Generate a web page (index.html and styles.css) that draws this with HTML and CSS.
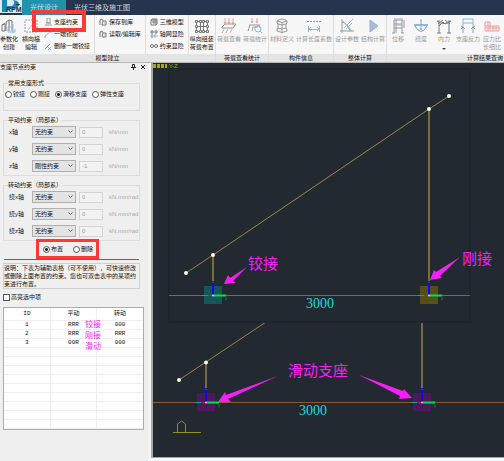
FILE: index.html
```html
<!DOCTYPE html>
<html lang="zh-CN">
<head>
  <meta charset="UTF-8" />
  <meta name="viewport" content="width=device-width, initial-scale=1.0"/>
  <title>光伏设计</title>
  <link rel="stylesheet" href="styles.css">
</head>
<body>
  <header class="topbar">
    <div class="logo">
      <svg width="22" height="15" viewBox="0 0 22 15">
        <rect width="22" height="15" fill="#d9eaf0"/>
        <path d="M2 12V0h9q8 0 8 4t-7 5H7v3z" fill="#1989b4"/>
        <path d="M7 0h6q3 3-1 6H7z" fill="#d9eaf0"/>
        <path d="M0 13h22v2H0z" fill="#26344d"/>
        <text x="6" y="12" class="logo-text">RPM</text>
        <path d="M16 4h4l-2 2z" fill="#123"/>
      </svg>
    </div>
    <nav class="tabs">
      <a href="#" class="tab active">光伏设计</a>
      <a href="#" class="tab">光伏三维及施工图</a>
    </nav>
  </header>

  <div class="ribbon">
    <section class="group">
      <div class="tools">
        <div class="big-tools">
          <button class="tool"><svg width="16" height="16" viewBox="0 0 16 16" class="ico dark"><path d="M1 13V7l3-1v7zM5 13V4l3-2v11M8 2l3 1v10M1 7l3-2"/><path class="blue" d="M7 9h5v5H7zM12 6v3M14 11v3h-3"/></svg>参数化<br>创建</button>
          <button class="tool"><svg width="16" height="16" viewBox="0 0 16 16" class="ico"><path stroke-dasharray="2 1" d="M2 2h12v12H2z"/><path class="blue" d="M5 12l5-6"/></svg>横向榀<br>编辑</button>
        </div>
        <div class="rows">
          <button class="row-tool"><svg width="8" height="8" viewBox="0 0 8 8" class="ico"><path d="M3 0h3v5H3zM1 7h7M2 5h5"/></svg>支座约束</button>
          <button class="row-tool"><svg width="8" height="8" viewBox="0 0 8 8" class="ico"><path class="blue" d="M1 6l5-4M5 1h2v2"/><path d="M0 7h2"/></svg>一端铰接</button>
          <button class="row-tool"><svg width="8" height="8" viewBox="0 0 8 8" class="ico"><path d="M1 7l5-5"/><path class="red" d="M4 5l3 3M7 5L4 8"/></svg>删除一端铰接</button>
          <span class="mark-support"></span>
        </div>
        <div class="rows line-left">
          <button class="row-tool"><svg width="8" height="8" viewBox="0 0 8 8" class="ico dark"><path d="M1 7V2l2-1 1 2M4 3h3v4H3z"/><path class="blue" d="M5 5h2"/></svg>保存到库</button>
          <button class="row-tool"><svg width="8" height="8" viewBox="0 0 8 8" class="ico dark"><path d="M1 7V2l2-1 1 2M4 3h3v4H3z"/><path class="blue" d="M5 5h2"/></svg>读取/编辑库</button>
        </div>
        <div class="rows line-left">
          <button class="row-tool"><svg width="8" height="8" viewBox="0 0 8 8" class="ico dark"><path d="M1 2h5v5H1zM1 2l1-1h5v5L6 7M3 3h2v2H3z"/></svg>三维模型</button>
          <button class="row-tool"><svg width="8" height="8" viewBox="0 0 8 8" class="ico dark"><path d="M2 0v8M0 2h8M6 0v4"/><path class="blue" d="M0 6h8M5 4v4"/></svg>轴网显隐</button>
          <button class="row-tool"><svg width="8" height="8" viewBox="0 0 8 8" class="ico dark"><circle cx="2" cy="4" r="1.5"/><circle cx="6" cy="4" r="1.5"/></svg>约束显隐</button>
        </div>
        <div class="big-tools line-left">
          <button class="tool"><svg width="16" height="16" viewBox="0 0 16 16" class="ico dark"><path d="M2 3.5h12M2 8.5h12M2 13.5h12M2.5 3v10M6.5 3v10M9.5 3v10M13.5 3v10"/><path fill="#f7f7f7" d="M1.500 2.500h2v2h-2zM5.500 2.500h2v2h-2zM8.500 2.500h2v2h-2zM12.500 2.500h2v2h-2zM1.500 7.500h2v2h-2zM12.500 7.500h2v2h-2zM1.500 12.500h2v2h-2zM5.500 12.500h2v2h-2zM8.500 12.500h2v2h-2zM12.500 12.500h2v2h-2z"/></svg>纵向组装<br>荷载布置</button>
        </div>
      </div>
      <h2>模型建立</h2>
    </section>

    <section class="group">
      <div class="tools pair">
        <button class="tool" disabled><svg width="16" height="16" viewBox="0 0 16 16" class="ico"><path class="red" d="M4 0v5M8 0v5M12 0v5M3 4l1 2 1-2M7 4l1 2 1-2M11 4l1 2 1-2M3 11l-2 4M7 11l-2 4M11 11l-2 4"/><path d="M1 9l3-3h11l-3 4H1z"/></svg>荷载查看</button>
        <button class="tool" disabled><svg width="16" height="16" viewBox="0 0 16 16" class="ico"><path class="red" d="M5 0v4M10 0v4M4 3l1 2 1-2M9 3l1 2 1-2"/><path d="M2 7h11M3 7l-2 6M5 13l1-4h5M12 7l1 3"/><circle class="blue" cx="11" cy="11" r="3"/><path class="blue" d="M13 13l2 2"/></svg>荷载统计</button>
      </div>
      <h2>荷载查看统计</h2>
    </section>

    <section class="group">
      <div class="tools pair">
        <button class="tool" disabled><svg width="16" height="16" viewBox="0 0 16 16" class="ico"><path d="M3 3q5-4 10 0v2l-1 1v4l1 1v2q-5 3-10 0v-2l1-1V6L3 5zM3 3q5 3 10 0M4 6q4 2 8 0M4 10q4 2 8 0M8 4v11"/></svg>材料定义</button>
        <button class="tool" disabled><svg width="16" height="16" viewBox="0 0 16 16" class="ico"><path stroke-dasharray="2 1" d="M1 3.5h14"/><path class="blue" d="M2.500 8v6M13.500 8v6M2 11.500h12M5 9l-2 2 2 2M11 9l2 2-2 2"/></svg>计算长度系数</button>
      </div>
      <h2>构件信息</h2>
    </section>

    <section class="group">
      <div class="tools pair">
        <button class="tool" disabled><svg width="16" height="16" viewBox="0 0 16 16" class="ico"><path d="M3 1v14M1 13h14M3 4q5 1 8 9"/><path class="blue" d="M5 10l9-9M7 11l6-6M4 3l9 10"/></svg>设计参数</button>
        <button class="tool" disabled><svg width="16" height="16" viewBox="0 0 16 16"><path d="M5 2l8 6-8 6z" fill="#a9bdd3" stroke="#8fb0d6"/></svg>结构计算</button>
      </div>
      <h2>整体计算</h2>
    </section>

    <section class="group results">
      <div class="tools">
        <button class="tool" disabled><svg width="16" height="16" viewBox="0 0 16 16" class="ico"><path d="M4 2v13M12 2v13M2 15h3M11 15h3M4 2h9M4 6h8M4 10h8M6 2v13M14 2v8"/><path class="blue" d="M4 1h9M5 7h7"/></svg>位移</button>
        <button class="tool" disabled><svg width="16" height="16" viewBox="0 0 16 16" class="ico"><path d="M8 1v6M2 8q6 11 12 0"/><path class="blue" stroke-width="2" d="M1 7h14"/><path class="blue" d="M8 8v3M7 10l1 2 1-2"/></svg>挠度</button>
        <button class="tool" disabled><svg width="16" height="16" viewBox="0 0 16 16" class="ico dark"><path d="M1 3q7 5 14 0M3 2v13M13 2v13M2 6l5-4M14 6L9 2M3 8l4-4 2 2 4-2M1 15h4M11 15h4"/></svg>内力<span class="caret"></span></button>
        <button class="tool" disabled><svg width="16" height="16" viewBox="0 0 16 16" class="ico"><path class="blue" d="M3 1h10v4H3zM3 5v4M13 5v4"/><path d="M3 9v6M13 9v6M1 11l2-2 2 2M11 11l2-2 2 2M1 8l2 1M15 8l-2 1"/></svg>支座反力</button>
        <button class="tool" disabled><svg width="16" height="16" viewBox="0 0 16 16" class="ico"><path class="red" d="M1 4h5v4h9v5H1zM1 8h5M1 10h14M4 4v9M6 8v5M9 8v5M12 8v5"/></svg>应力比<br>长细比</button>
      </div>
      <h2>计算结果查询</h2>
    </section>
  </div>

  <main class="workspace">
    <aside class="panel">
      <div class="panel-title">
        <span>支座节点约束</span>
        <svg width="16" height="8" viewBox="0 0 16 8"><path d="M2.500 1.500h2v3h-2zM1 4.500h5M3.500 5v2M11 2l4 4M15 2l-4 4" fill="none" stroke="#222"/></svg>
      </div>

      <fieldset>
        <legend>常用支座形式</legend>
        <div class="radios">
          <label><input type="radio" name="type">铰接</label>
          <label><input type="radio" name="type">刚接</label>
          <label><input type="radio" name="type" checked>滑移支座</label>
          <label><input type="radio" name="type">弹性支座</label>
        </div>
      </fieldset>

      <fieldset>
        <legend>平动约束（局部系）</legend>
        <div class="field"><label for="tx">x轴</label><select id="tx"><option>无约束</option></select><input type="text" value="0" aria-label="x轴刚度" disabled><span>kN/mm</span></div>
        <div class="field"><label for="ty">y轴</label><select id="ty"><option>无约束</option></select><input type="text" value="0" aria-label="y轴刚度" disabled><span>kN/mm</span></div>
        <div class="field"><label for="tz">z轴</label><select id="tz"><option>刚性约束</option></select><input type="text" value="-1" aria-label="z轴刚度" disabled><span>kN/mm</span></div>
      </fieldset>

      <fieldset>
        <legend>转动约束（局部系）</legend>
        <div class="field"><label for="rx">绕x轴</label><select id="rx"><option>无约束</option></select><input type="text" value="0" aria-label="绕x轴刚度" disabled><span>kN.mm/rad</span></div>
        <div class="field"><label for="ry">绕y轴</label><select id="ry"><option>无约束</option></select><input type="text" value="0" aria-label="绕y轴刚度" disabled><span>kN.mm/rad</span></div>
        <div class="field"><label for="rz">绕z轴</label><select id="rz"><option>无约束</option></select><input type="text" value="0" aria-label="绕z轴刚度" disabled><span>kN.mm/rad</span></div>
      </fieldset>

      <div class="mode">
        <label><input type="radio" name="mode" checked>布置</label>
        <label><input type="radio" name="mode">删除</label>
      </div>

      <p class="note">说明：下表为辅助表格（可不使用），可快速修改或删除上面布置的约束。您也可双击表中的某项约束进行布置。</p>

      <label class="highlight"><input type="checkbox">高亮选中项</label>

      <div class="table-box">
        <table>
          <thead>
            <tr><th>ID</th><th>平动</th><th>转动</th></tr>
          </thead>
          <tbody>
            <tr><td>1</td><td>RRR</td><td>000</td></tr>
            <tr><td>2</td><td>RRR</td><td>RRR</td></tr>
            <tr><td>3</td><td>00R</td><td>000</td></tr>
            <tr><td></td><td></td><td></td></tr>
            <tr><td></td><td></td><td></td></tr>
            <tr><td></td><td></td><td></td></tr>
            <tr><td></td><td></td><td></td></tr>
            <tr><td></td><td></td><td></td></tr>
            <tr><td></td><td></td><td></td></tr>
            <tr><td></td><td></td><td></td></tr>
            <tr><td></td><td></td><td></td></tr>
            <tr><td></td><td></td><td></td></tr>
          </tbody>
        </table>
        <div class="table-notes">铰接<br>刚接<br>滑动</div>
      </div>
    </aside>

    <div class="canvas">
      <svg viewBox="0 0 351 394">
        <defs>
          <!-- local axes, origin at the support node -->
          <g id="axes">
            <path d="M-11 0h6" stroke="#16a0a0"/>
            <path d="M-5 0h5" stroke="#c02040"/>
            <path d="M0 -1v-12" stroke="#0a0af0" stroke-width="2"/>
            <path d="M-5 -14h6" stroke="#1a1a9c"/>
            <path d="M1 0h12" stroke="#00e050" stroke-width="2"/>
            <path d="M12 2l1 1 1-1M13 3v2" stroke="#0a8a20" fill="none"/>
            <circle r="1" fill="#f0d0e0"/>
          </g>
        </defs>

        <g fill="#a9a800">
          <path d="M0 1h3v4H0zM4 1h3v4H4zM8 1h3v4H8zM12 1h2v4h-2z"/>
          <text x="14" y="5" class="view-name">:Y-Z</text>
        </g>

        <!-- lower view -->
        <path d="M0 339.5h351" stroke="#95562f"/>
        <path class="beam" d="M26 317L53 299L113 259"/>
        <path class="column" d="M53 299v40M269 259v80"/>
        <path d="M44 330h18v18H44zM260 330h18v18h-18z" fill="#4b1a5c"/>
        <use href="#axes" x="53" y="339.5"/>
        <use href="#axes" x="269" y="339.5"/>
        <g fill="#fff8e8"><circle cx="26" cy="317" r="2"/><circle cx="53" cy="299.5" r="2"/></g>
        <path d="M20 369.5h28M24.5 369v-8l4-3 4 3v8" fill="none" stroke="#8f8f10"/>

        <!-- upper view -->
        <rect class="view" x="16" y="6" width="301" height="253"/>
        <path d="M16 232.5h301" stroke="#95603f"/>
        <path d="M51 223h18v18H51z" fill="#165558"/>
        <path d="M267 223h18v18h-18z" fill="#55501a"/>
        <path class="beam" d="M33 210L60 192L276 46L296 33"/>
        <path class="column" d="M60 192v40M276 46v186"/>
        <use href="#axes" x="60" y="232.5"/>
        <use href="#axes" x="276" y="232.5"/>
        <g fill="#fff8e8">
          <circle cx="33" cy="210" r="2"/><circle cx="60" cy="192" r="2"/>
          <circle cx="276" cy="46" r="2"/><circle cx="296" cy="33" r="2"/>
        </g>

        <g fill="#f71ff7">
          <path d="M71 221l4-9 2 3 17-11-14 14 3 2z"/>
          <path d="M277 217l4-10 2 2 24-15-20 19 2 2z"/>
          <path d="M65 339l7-10 1 3 52-19-50 23 3 3z"/>
          <path d="M259 335l-8-9-1 2-44-16 41 21-1 3z"/>
        </g>

        <g class="callout">
          <text x="95" y="206">铰接</text>
          <text x="309" y="201">刚接</text>
          <text x="135" y="313">滑动支座</text>
        </g>
        <g class="dim">
          <text x="153" y="245">3000</text>
          <text x="146" y="352">3000</text>
        </g>
      </svg>
    </div>
  </main>
</body>
</html>
```
FILE: styles.css
```css
:root {
  --navy: #26344d;
  --teal: #2391ab;
  --panel: #efefef;
  --canvas: #222930;
  --mark: #fb3a38;
  --magenta: #f71ff7;
}

* {
  box-sizing: border-box;
}

body {
  margin: 0;
  min-height: 100vh;
  display: flex;
  flex-direction: column;
  overflow-x: hidden;
  background: #f8f8f8;
  color: #111;
  font-family: "Liberation Sans", "Noto Sans CJK SC", sans-serif;
  font-size: 6px;
  line-height: 8px;
  text-spacing-trim: space-all;
}

button, input, select {
  font: inherit;
  color: inherit;
  margin: 0;
}

/* top bar */
.topbar {
  display: flex;
  height: 15px;
  background: var(--navy);
}

.logo {
  width: 22px;
}

.logo svg {
  display: block;
}

.logo-text {
  font-size: 7px;
  font-weight: bold;
  fill: #17304a;
}

.tabs {
  display: flex;
}

.tab {
  padding: 0 8px;
  font-size: 7px;
  line-height: 16px;
  color: #cfd6e0;
  text-decoration: none;
}

.tab.active {
  background: var(--teal);
  color: #bfe3ec;
}

/* ribbon */
.ribbon {
  display: grid;
  grid-template-columns: 215px 53px 65px 53px 1fr;
  height: 48px;
  background: #f7f7f7;
  border-bottom: 1px solid #b4b4b4;
}

.group {
  display: flex;
  flex-direction: column;
  min-width: 0;
}

.group + .group {
  border-left: 1px solid #dcdcdc;
}

.group h2 {
  margin: 0;
  background: #e4e4e4;
  font-size: 6px;
  font-weight: normal;
  line-height: 8px;
  text-align: center;
}

.tools {
  display: flex;
  flex: 1;
}

.pair {
  justify-content: space-around;
}

.big-tools {
  display: flex;
  gap: 4px;
}

.tool {
  display: flex;
  flex-direction: column;
  align-items: center;
  padding: 3px 0 0;
  border: none;
  background: none;
  white-space: nowrap;
  text-align: center;
}

.tool svg {
  flex: none;
  margin-bottom: 1px;
}

.tool:disabled {
  color: #999;
}

.rows {
  display: flex;
  flex-direction: column;
  gap: 4px;
  position: relative;
  padding: 3px 4px 0;
}

.line-left {
  border-left: 1px solid #dcdcdc;
}

.big-tools.line-left {
  padding-left: 1px;
}

.row-tool {
  display: flex;
  align-items: center;
  gap: 2px;
  padding: 0;
  border: none;
  background: none;
  white-space: nowrap;
}

.mark-support {
  position: absolute;
  left: -8px;
  top: -5px;
  width: 54px;
  height: 22px;
  border: 4px solid var(--mark);
}

.ico {
  fill: none;
  stroke: #999;
}

.ico.dark {
  stroke: #777;
}

.ico .blue {
  stroke: #8fb6e4;
}

.ico .red {
  stroke: #e8a0a0;
}

.results {
  overflow: hidden;
}

.results h2 {
  width: 196px;
}

.results .tools {
  gap: 1px;
}

.results .tool {
  min-width: 22px;
}

.caret {
  margin-top: 5px;
  border: 2px solid transparent;
  border-top-color: #444;
}

/* work area */
.workspace {
  display: flex;
  flex: 1;
}

.panel {
  width: 149px;
  padding: 0 9px 0 3px;
  flex: none;
  background: var(--panel);
}

.panel-title {
  display: flex;
  justify-content: space-between;
  margin: 0 -6px 8px -3px;
}

fieldset {
  margin: 0 0 5px;
  padding: 1px 0 2px 4px;
  border: 1px solid #dcdcdc;
  min-width: 0;
}

legend {
  padding: 0;
}

.radios {
  display: flex;
  gap: 5px;
  height: 20px;
  margin-left: -3px;
  padding-top: 2px;
}

.radios label, .mode label, .highlight {
  display: flex;
  align-items: center;
  gap: 1px;
  height: 8px;
  white-space: nowrap;
}

input[type="radio"], input[type="checkbox"] {
  appearance: none;
  flex: none;
  width: 7px;
  height: 7px;
  border: 1px solid #555;
  background: #fff;
}

input[type="radio"] {
  border-radius: 50%;
}

input[type="radio"]:checked {
  background: radial-gradient(#222 0 1px, #fff 2px);
}

.field {
  display: grid;
  grid-template-columns: 24px 44px 24px 1fr;
  column-gap: 3px;
  align-items: center;
  height: 14px;
  margin-left: -3px;
}

.field + .field {
  margin-top: 3px;
}

.field label {
  padding-left: 4px;
}

.field select {
  appearance: none;
  min-width: 0;
  height: 12px;
  padding: 0 2px;
  border: 1px solid #b0b0b0;
  border-radius: 0;
  background: #e3e3e3 url("data:image/svg+xml,%3Csvg xmlns='http://www.w3.org/2000/svg' width='5' height='4'%3E%3Cpath d='M.5 .5l2 2 2-2' fill='none' stroke='%23666'/%3E%3C/svg%3E") no-repeat right 2px center;
}

.field input {
  min-width: 0;
  width: 24px;
  height: 11px;
  padding: 0 2px;
  border: 1px solid #d4d4d4;
  background: #f2f2f2;
  color: #999;
}

.field span {
  padding-left: 3px;
  color: #aaa;
}

.mode {
  display: flex;
  align-items: center;
  gap: 10px;
  width: 63px;
  height: 20px;
  margin: -7px 0 0 33px;
  padding-left: 4px;
  border: 3px solid var(--mark);
}

.note {
  position: relative;
  margin: 4px 0;
  border: 1px solid #d0d0d0;
}

.note::before {
  content: "";
  position: absolute;
  left: 0;
  right: 0;
  top: -5px;
  border-top: 1px solid #666;
}

.table-box {
  position: relative;
  margin: 6px -4px 0 0;
  border: 1px solid #a8acb4;
  background: #fff;
}

table {
  width: 100%;
  border-collapse: collapse;
  table-layout: fixed;
  font-family: "Liberation Mono", "Noto Sans CJK SC", monospace;
}

th, td {
  height: 9px;
  padding: 0;
  border-right: 1px solid #eee;
  border-bottom: 1px solid #eee;
  font-weight: normal;
  line-height: 8px;
  text-align: center;
}

th {
  height: 12px;
}

th:last-child, td:last-child {
  border-right: none;
}

.table-notes {
  position: absolute;
  left: 81px;
  top: 11px;
  color: var(--magenta);
  font-size: 8px;
  line-height: 11px;
}

/* drawing area */
.canvas {
  flex: 1;
  min-width: 0;
  margin: 0 0 3px 2px;
  border-left: 2px solid #a6a6a6;
  border-bottom: 1px solid #a6a6a6;
  background: var(--canvas);
}

.canvas svg {
  display: block;
  width: 100%;
}

.view {
  fill: var(--canvas);
  stroke: #1e252b;
  stroke-width: 2;
}

.beam {
  fill: none;
  stroke: #9c8748;
}

.column {
  stroke: #7d6a3a;
  stroke-width: 2;
}

.view-name {
  font-size: 6px;
}

.callout {
  fill: var(--magenta);
  font-size: 15px;
}

.dim {
  fill: #12dede;
  font-family: "Liberation Serif", serif;
  font-size: 14px;
}
```
